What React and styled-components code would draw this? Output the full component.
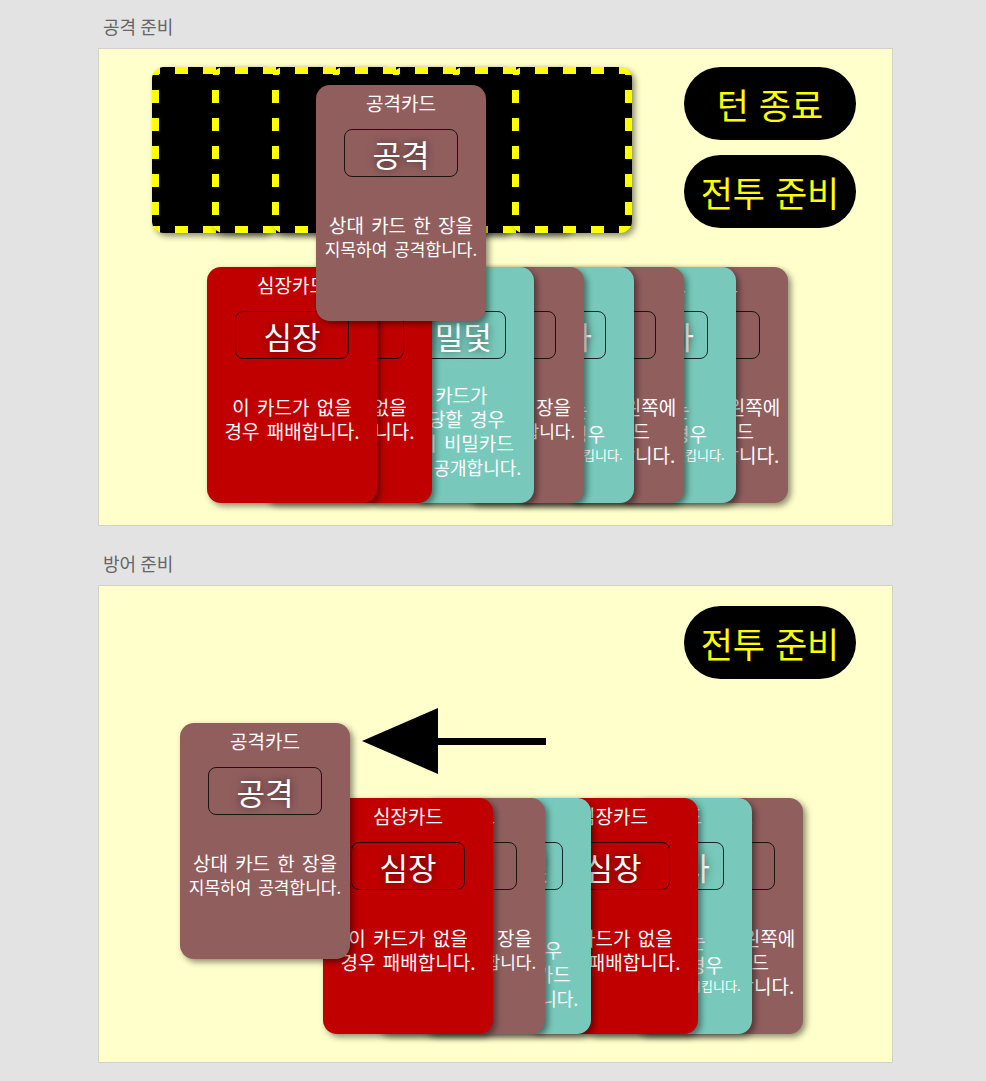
import React from "react";
import styled, { createGlobalStyle } from "styled-components";

const GlobalStyle = createGlobalStyle`
  html, body {
    margin: 0;
    padding: 0;
    background: #e3e3e3;
  }
  body {
    font-family: "Noto Sans CJK KR", "Noto Sans", sans-serif;
  }
`;

// card kinds, lines are [text, fontSize, lineHeight]
const KINDS = {
  heart: {
    bg: "#c00000",
    title: "심장카드",
    name: "심장",
    lines: [["이 카드가 없을", 19], ["경우 패배합니다.", 19], ["", 19]],
  },
  attack: {
    bg: "#915e5e",
    title: "공격카드",
    name: "공격",
    lines: [["상대 카드 한 장을", 19], ["지목하여 공격합니다.", 17], ["", 17]],
  },
  trap: {
    bg: "#78c9bb",
    title: "비밀카드",
    name: "비밀덫",
    lines: [["이 카드가", 19], ["공격당할 경우", 19], ["상대의 비밀카드", 19], ["하나를 공개합니다.", 18]],
  },
  magic: {
    bg: "#78c9bb",
    title: "비밀카드",
    name: "마술사",
    lines: [["이 카드는", 19], ["공격받을 경우", 19], ["상대 카드를 반전시킵니다.", 13, 18]],
  },
  place: {
    bg: "#915e5e",
    title: "배치카드",
    name: "배치",
    lines: [["자신의 카드 왼쪽에", 19], ["한 장의 카드", 19], ["추가로 배치합니다.", 19]],
  },
};

const attackHand = [
  ["heart", 0],
  ["heart", -115],
  ["trap", -68],
  ["attack", -120],
  ["magic", -120],
  ["place", -120],
  ["magic", -118],
  ["place", -118],
];

const defenseHand = [
  ["heart", 0],
  ["attack", -118],
  ["trap", -124],
  ["heart", -63],
  ["magic", -116],
  ["place", -119],
];

const GameCard = ({ kind, shift = 0, z = 1 }) => {
  const k = KINDS[kind];
  return (
    <Card $bg={k.bg} $shift={shift} $z={z}>
      <CardTitle>{k.title}</CardTitle>
      <NameBox>{k.name}</NameBox>
      <Desc>
        {k.lines.map(([t, size, lh], i) => (
          <DescLine key={i} $size={size} $lh={lh || 24}>
            {t || "\u00a0"}
          </DescLine>
        ))}
      </Desc>
    </Card>
  );
};

const Hand = ({ cards, ...rest }) => (
  <HandRow {...rest}>
    {cards.map(([kind, shift], i) => (
      <GameCard key={i} kind={kind} shift={shift} z={cards.length - i} />
    ))}
  </HandRow>
);

const Arrow = () => (
  <svg width="184" height="67" viewBox="0 0 184 67">
    <polygon points="0,33 76,0 76,66" fill="#000" />
    <rect x="75" y="30" width="109" height="7" fill="#000" />
  </svg>
);

const App = () => {
  return (
    <Page>
      <GlobalStyle />
      <Section>
        <SectionTitle>공격 준비</SectionTitle>
        <Board>
          <TopRow $pad="18px 36px 0 53px">
            <HiddenRow>
              {Array.from({ length: 7 }).map((_, i) => (
                <CardBack key={i} />
              ))}
            </HiddenRow>
            <ButtonStack>
              <ActionButton>턴 종료</ActionButton>
              <ActionButton>전투 준비</ActionButton>
            </ButtonStack>
          </TopRow>
          <Hand cards={attackHand} $top={34} $left={108} />
          <Floating $x={217} $y={36}>
            <GameCard kind="attack" />
          </Floating>
        </Board>
      </Section>

      <Section>
        <SectionTitle>방어 준비</SectionTitle>
        <Board>
          <TopRow $pad="20px 36px 0 0" $end>
            <ActionButton>전투 준비</ActionButton>
          </TopRow>
          <Hand cards={defenseHand} $top={119} $left={224} />
          <Floating $x={81} $y={137}>
            <GameCard kind="attack" />
          </Floating>
          <Floating $x={263} $y={122}>
            <Arrow />
          </Floating>
        </Board>
      </Section>
    </Page>
  );
};

const Page = styled.div`
  padding: 16px 0 20px 98px;
  width: 795px;
`;

const Section = styled.section`
  & + & {
    margin-top: 27px;
  }
`;

const SectionTitle = styled.div`
  padding-left: 5px;
  height: 20px;
  line-height: 20px;
  font-size: 18px;
  color: #666;
  margin-bottom: 12px;
`;

const Board = styled.div`
  position: relative;
  box-sizing: border-box;
  width: 795px;
  height: 478px;
  background: #ffffcc;
  border: 1px solid #d2d2cc;
`;

const TopRow = styled.div`
  display: flex;
  justify-content: ${(p) => (p.$end ? "flex-end" : "space-between")};
  align-items: flex-start;
  padding: ${(p) => p.$pad};
`;

const HiddenRow = styled.div`
  display: flex;
`;

const dashX = "repeating-linear-gradient(90deg, #ff0 0 8px, transparent 8px 23px, #ff0 23px 28px)";
const dashY = "repeating-linear-gradient(180deg, #ff0 0 8px, transparent 8px 23px, #ff0 23px 28px)";

const CardBack = styled.div`
  flex: none;
  box-sizing: border-box;
  width: 120px;
  height: 166px;
  border-radius: 12px;
  background:
    ${dashX} left top / 100% 7px no-repeat,
    ${dashX} left bottom / 100% 7px no-repeat,
    ${dashY} left top / 7px 100% no-repeat,
    ${dashY} right top / 7px 100% no-repeat,
    #000;
  box-shadow: 3px 3px 6px rgba(0, 0, 0, 0.45);
  & + & {
    margin-left: -60px;
  }
`;

const ButtonStack = styled.div`
  display: flex;
  flex-direction: column;
  gap: 15px;
`;

const ActionButton = styled.button`
  width: 172px;
  height: 73px;
  border: none;
  border-radius: 37px;
  background: #000;
  color: #ffff00;
  font-family: "Noto Sans CJK KR", "Noto Sans", sans-serif;
  font-size: 35px;
  word-spacing: 2px;
  padding: 0;
  cursor: pointer;
`;

const HandRow = styled.div`
  display: flex;
  margin-top: ${(p) => p.$top}px;
  padding-left: ${(p) => p.$left}px;
`;

const Floating = styled.div`
  position: absolute;
  left: ${(p) => p.$x}px;
  top: ${(p) => p.$y}px;
  z-index: 50;
  line-height: 0;
`;

const Card = styled.div`
  flex: none;
  position: relative;
  z-index: ${(p) => p.$z};
  box-sizing: border-box;
  width: 170px;
  height: 236px;
  margin-left: ${(p) => p.$shift}px;
  border-radius: 14px;
  background: ${(p) => p.$bg};
  box-shadow: 3px 3px 6px rgba(0, 0, 0, 0.45);
  display: flex;
  flex-direction: column;
  align-items: center;
  color: #fff;
  line-height: normal;
`;

const CardTitle = styled.div`
  margin-top: 8px;
  height: 20px;
  line-height: 20px;
  font-size: 19px;
`;

const NameBox = styled.div`
  box-sizing: border-box;
  margin-top: 16px;
  width: 114px;
  height: 48px;
  border: 1px solid rgba(0, 0, 0, 0.8);
  border-radius: 8px;
  display: flex;
  align-items: center;
  justify-content: center;
  font-size: 31px;
  text-shadow: 0 0 8px rgba(0, 0, 0, 0.6);
  white-space: nowrap;
`;

const Desc = styled.div`
  flex: 1;
  align-self: stretch;
  display: flex;
  flex-direction: column;
  align-items: center;
  justify-content: center;
`;

const DescLine = styled.div`
  font-size: ${(p) => p.$size}px;
  line-height: ${(p) => p.$lh}px;
  word-spacing: 3px;
  white-space: nowrap;
`;

export default App;
